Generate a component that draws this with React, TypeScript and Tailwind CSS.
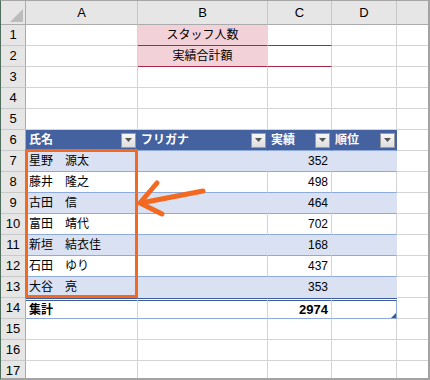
import clsx from "clsx";
import type { ReactNode } from "react";

const W = ["w-[112px]", "w-[130px]", "w-[64px]", "w-[65px]", "w-[65px]"];
const LETTERS = ["A", "B", "C", "D", "E"];

const staff = [
    { name: "星野　源太", score: 352 },
    { name: "藤井　隆之", score: 498 },
    { name: "古田　信", score: 464 },
    { name: "富田　靖代", score: 702 },
    { name: "新垣　結衣佳", score: 168 },
    { name: "石田　ゆり", score: 437 },
    { name: "大谷　亮", score: 353 },
];

const GRID = "bg-white border-r-[#d4d4d4] border-b-[#d4d4d4]";

function Cell({
    col,
    className,
    children,
}: {
    col: number;
    className?: string;
    children?: ReactNode;
}) {
    return (
        <div
            className={clsx(
                "relative h-full shrink-0 flex items-center border-r border-b overflow-hidden whitespace-nowrap",
                W[col],
                className ?? GRID
            )}
        >
            {children}
        </div>
    );
}

function Row({ n, children }: { n: number; children: ReactNode }) {
    return (
        <div className="flex h-[21px] shrink-0">
            <div className="w-[25px] shrink-0 h-full flex items-center justify-center bg-[#e6e6e6] border-r border-b border-r-[#ababab] border-b-[#c9c9c9] text-[13px] text-black">
                {n}
            </div>
            {children}
        </div>
    );
}

function FilterButton() {
    return (
        <span className="w-[15px] h-[15px] shrink-0 flex items-center justify-center bg-gradient-to-b from-[#f7f7f7] to-[#dedede] border border-[#9a9a9a]">
            <svg width="7" height="4" viewBox="0 0 7 4">
                <polygon points="0,0 7,0 3.5,4" fill="#555" />
            </svg>
        </span>
    );
}

function EmptyRow({ n }: { n: number }) {
    return (
        <Row n={n}>
            {W.map((_, i) => (
                <Cell key={i} col={i} />
            ))}
        </Row>
    );
}

export default function App() {
    const head = ["氏名", "フリガナ", "実績", "順位"];

    return (
        <div className="relative w-[430px] h-[380px] overflow-hidden bg-white border-t border-l border-r-2 border-b-2 border-t-[#a6a6a6] border-l-[#4f6d5d] border-r-[#a3a3a3] border-b-[#a3a3a3] font-['Liberation_Sans','Noto_Sans_CJK_JP',sans-serif] text-[12px] text-black">
            <div className="flex flex-col w-[500px]">
                {/* column letters */}
                <div className="flex h-[24px] shrink-0">
                    <div className="w-[25px] shrink-0 h-full flex items-end justify-end bg-[#e6e6e6] border-r border-b border-r-[#ababab] border-b-[#ababab] pr-[1px] pb-[1px]">
                        <svg width="14" height="15" viewBox="0 0 14 15">
                            <polygon points="13,1 13,14 0,14" fill="#bcbcbc" />
                        </svg>
                    </div>
                    {LETTERS.map((l, i) => (
                        <div
                            key={l}
                            className={clsx(
                                "h-full shrink-0 flex items-center justify-center bg-[#e6e6e6] border-r border-b border-r-[#c6c6c6] border-b-[#ababab] text-[13px]",
                                W[i],
                                i === 4 && "pl-[5px]"
                            )}
                        >
                            {l}
                        </div>
                    ))}
                </div>

                {/* summary labels */}
                {["スタッフ人数", "実績合計額"].map((label, r) => (
                    <Row key={label} n={r + 1}>
                        <Cell col={0} />
                        <Cell
                            col={1}
                            className="bg-[#f2d1d8] border-r-[#f2d1d8] border-b-[#a62a45] justify-center"
                        >
                            {label}
                        </Cell>
                        <Cell col={2} className="bg-white border-r-[#d4d4d4] border-b-[#a62a45]" />
                        <Cell col={3} />
                        <Cell col={4} />
                    </Row>
                ))}

                <EmptyRow n={3} />
                <EmptyRow n={4} />
                <EmptyRow n={5} />

                {/* table header */}
                <Row n={6}>
                    {head.map((h, i) => (
                        <Cell
                            key={h}
                            col={i}
                            className="bg-[#44629f] border-r-[#44629f] border-b-[#8eaadb] justify-between pl-[3px] pr-px font-bold text-white"
                        >
                            <span>{h}</span>
                            <FilterButton />
                        </Cell>
                    ))}
                    <Cell col={4} />
                </Row>

                {/* table body */}
                {staff.map((s, r) => {
                    const band = r % 2 === 0;
                    const last = r === staff.length - 1;
                    const fill = band
                        ? "bg-[#d9e1f2] border-r-[#d9e1f2]"
                        : "bg-white border-r-[#d4d4d4]";
                    const bottom = last ? "border-b-[#d9e1f2]" : "border-b-[#8eaadb]";
                    return (
                        <Row key={s.name} n={r + 7}>
                            <Cell col={0} className={clsx(fill, bottom, "pl-[3px]")}>
                                {s.name}
                            </Cell>
                            <Cell col={1} className={clsx(fill, bottom)} />
                            <Cell col={2} className={clsx(fill, bottom, "justify-end pr-[3px]")}>
                                {s.score}
                            </Cell>
                            <Cell col={3} className={clsx(fill, bottom, "border-r-[#8eaadb]")} />
                            <Cell col={4} />
                        </Row>
                    );
                })}

                {/* total row */}
                <Row n={14}>
                    {[0, 1, 2, 3].map((i) => (
                        <Cell
                            key={i}
                            col={i}
                            className={clsx(
                                "bg-white border-t-[3px] border-double border-t-[#3f5d9c] border-b-[#8eaadb] font-bold",
                                i === 3 ? "border-r-[#8eaadb]" : "border-r-[#d4d4d4]",
                                i === 0 && "pl-[3px]",
                                i === 2 && "justify-end pr-[3px] text-[13px]"
                            )}
                        >
                            {i === 0 && "集計"}
                            {i === 2 && "2974"}
                            {i === 3 && (
                                <svg
                                    className="absolute right-0 bottom-0"
                                    width="5"
                                    height="5"
                                    viewBox="0 0 5 5"
                                >
                                    <polygon points="5,0 5,5 0,5" fill="#3c56a0" />
                                </svg>
                            )}
                        </Cell>
                    ))}
                    <Cell col={4} />
                </Row>

                <EmptyRow n={15} />
                <EmptyRow n={16} />
                <EmptyRow n={17} />
            </div>

            {/* highlight box and arrow */}
            <svg
                className="absolute -left-px -top-px pointer-events-none"
                width="430"
                height="380"
                viewBox="0 0 430 380"
            >
                <rect x="26.5" y="150.5" width="110" height="146" fill="none" stroke="#f26a22" strokeWidth="3" />
                <g stroke="#f26a22" strokeWidth="5" strokeLinecap="round" strokeLinejoin="round" fill="none">
                    <line x1="203" y1="191" x2="141" y2="203" />
                    <polyline points="157,183 140,203 162,214" />
                </g>
            </svg>
        </div>
    );
}
